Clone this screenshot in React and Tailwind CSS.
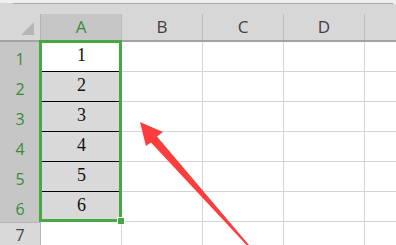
const cols = ['A', 'B', 'C', 'D']

const ColHeader = ({ label, active }) => (
    <div
        className={`flex items-center justify-center border-r border-[#bcbcbc] text-[17px] ${
            active ? 'bg-[#c6c6c6] text-[#3b8a3b]' : 'text-[#404040]'
        }`}
    >
        {label}
    </div>
)

const Row = ({ n, value }) => {
    const selected = value !== undefined
    return (
        <div className="grid grid-cols-[41px_81px_81px_81px_81px_1fr] h-[30px]">
            <div
                className={`flex justify-center border-r border-[#b5b5b5] text-[16px] ${
                    selected
                        ? 'items-center pt-[3px] bg-[#c6c6c6] text-[#3b8a3b]'
                        : 'items-start bg-[#d9d9d9] text-[#454545] border-t'
                }`}
            >
                {n}
            </div>
            {selected ? (
                <div className={`flex flex-col ${n === 1 ? 'bg-white' : 'bg-[#d9d9d9]'}`}>
                    <div className="flex-1 flex items-end justify-center pb-[2px] font-['Liberation_Serif',serif] text-[18px] text-[#111]">
                        {value}
                    </div>
                    <div className="h-px bg-[#000]" />
                </div>
            ) : (
                <div className="border-r border-b border-[#d4d4d4]" />
            )}
            <div className="border-r border-b border-[#d4d4d4]" />
            <div className="border-r border-b border-[#d4d4d4]" />
            <div className="border-r border-b border-[#d4d4d4]" />
            <div className="border-b border-[#d4d4d4]" />
        </div>
    )
}

export default function App() {
    return (
        <div className="relative w-[396px] h-[245px] overflow-hidden bg-white font-['Open_Sans',sans-serif]">
            {/* window edge */}
            <div className="h-[3px] bg-[#efefef]" />
            <div className="flex h-px bg-[#d7d7d7]">
                <div className="w-[13px]" />
                <div className="flex-1 bg-[#a9a9a9]" />
                <div className="w-[3px] bg-[#efefef]" />
            </div>
            <div className="h-[10px] bg-[#d7d7d7]" />

            {/* column headers */}
            <div className="grid grid-cols-[41px_81px_81px_81px_81px_1fr] h-[28px] bg-[#d7d7d7] border-b-2 border-[#a3a3a3]">
                <div className="relative border-r border-[#b5b5b5]">
                    <div className="absolute left-[21px] top-[8px] w-0 h-0 border-l-[13px] border-l-transparent border-b-[13px] border-b-[#b6b6b6]" />
                </div>
                {cols.map((c) => (
                    <ColHeader key={c} label={c} active={c === 'A'} />
                ))}
                <div />
            </div>

            {/* rows */}
            {[1, 2, 3, 4, 5, 6].map((n) => (
                <Row key={n} n={n} value={n} />
            ))}
            <Row n={7} />

            {/* selection A1:A6 */}
            <div className="absolute left-[39px] top-[40px] w-[83px] h-[182px] border-[3px] border-[#45a845]" />
            <div className="absolute left-[117px] top-[217px] w-[8px] h-[8px] bg-[#45a845] border border-white" />

            {/* red arrow */}
            <svg className="absolute left-0 top-0" width="396" height="245" viewBox="0 0 396 245">
                <polygon
                    points="140,122 163,132 157,136.5 249,245 246.5,245 151,142.5 146,146"
                    fill="#fb3d3d"
                />
            </svg>
        </div>
    )
}
